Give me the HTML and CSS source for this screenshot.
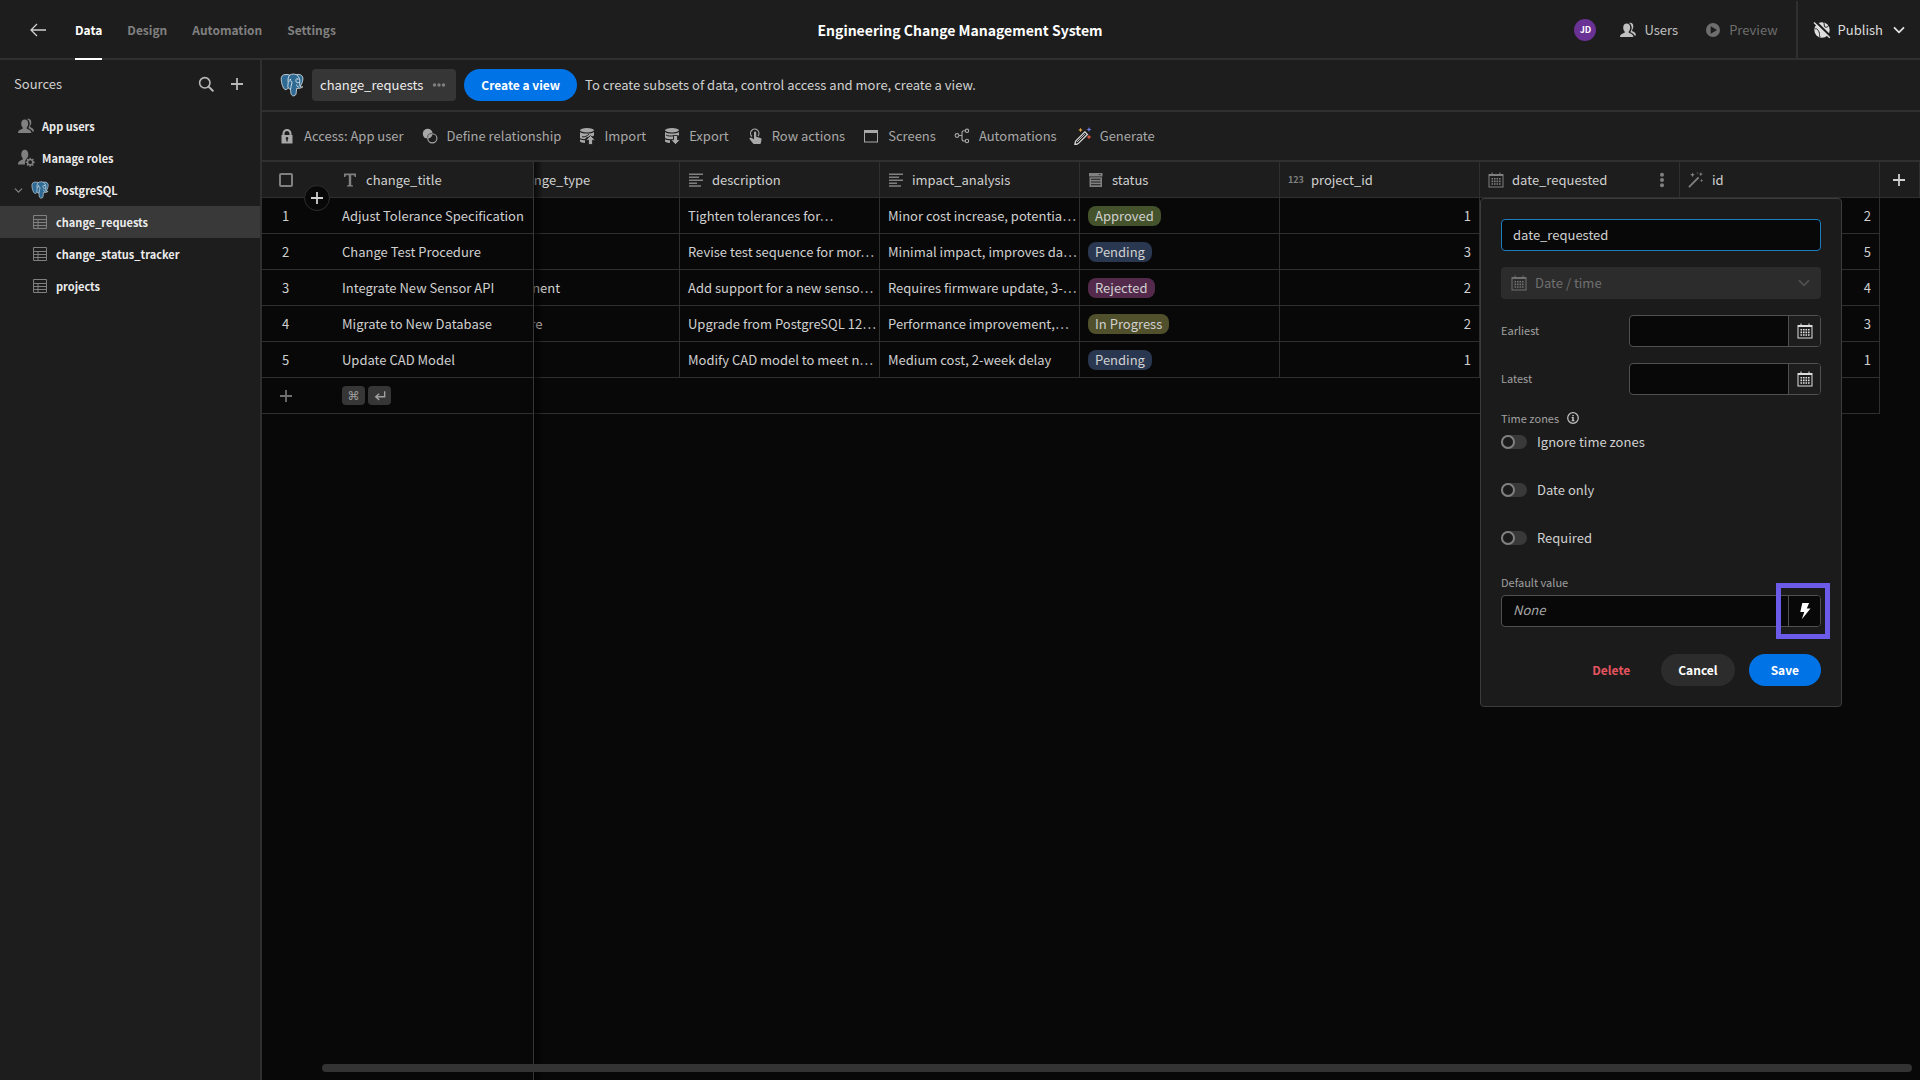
FILE: index.html
```
<!doctype html>
<html lang="en">
  <head>
    <title>Engineering Change Management System</title>
    <meta charset="utf-8">
    <meta name="viewport" content="width=device-width, initial-scale=1">
    <link rel="stylesheet" href="styles.css">
  </head>

  <body>
    <!-- icon sprite -->
    <svg class="sprite" aria-hidden="true">
      <symbol id="i-back" viewBox="0 0 18 18"><path d="M17 9H2M8 3L2 9l6 6" fill="none" stroke="currentColor" stroke-width="1.3"/></symbol>
      <symbol id="i-plus" viewBox="0 0 18 18"><path d="M9 3v12M3 9h12" stroke="currentColor" stroke-width="1.8" fill="none"/></symbol>
      <symbol id="i-search" viewBox="0 0 18 18"><circle cx="7.8" cy="7.8" r="5.2" fill="none" stroke="currentColor" stroke-width="1.6"/><path d="M11.6 11.6l4.2 4.2" stroke="currentColor" stroke-width="2" stroke-linecap="round"/></symbol>
      <symbol id="i-users" viewBox="0 0 18 18"><path d="M1 16c0-2.600 2.300-3.400 4.700-4.300v-1.200C4.600 9.500 4.200 8 4.200 6.500 4.200 3.900 5.700 2.400 7.700 2.400s3.500 1.500 3.500 4.100c0 1.500-.4 3-1.500 4v1.200c2.400.9 4.700 1.700 4.700 4.300z"/><path d="M10 1.900c2.600-.9 4.300.7 4.300 3.300 0 1.600-.4 2.700-1.200 3.700v1.200c2 .9 3.900 1.800 3.900 4.400h-1.600c-.7-1.700-2.300-2.600-4-3.200v-.6c1-1.200 1.300-2.700 1.300-4.200 0-2-.9-3.600-2.700-4.600z"/></symbol>
      <symbol id="i-roles" viewBox="0 0 18 18"><path d="M8 15.500H1c0-3 2.400-4.100 4.800-5v-1.200c-1-1-1.500-2.300-1.500-3.900 0-2.900 1.400-4.600 3.500-4.600s3.500 1.700 3.500 4.600c0 1.600-.5 2.900-1.500 3.900C8.300 11 7.600 13.300 8 15.500z"/><circle cx="13.200" cy="13.200" r="2.600" fill="none" stroke="currentColor" stroke-width="1.500"/><path d="M13.200 8.700v1.900M13.200 15.800v1.900M8.700 13.200h1.900M15.800 13.200h1.900M10 10l1.400 1.400M15 15l1.400 1.400M16.400 10L15 11.400M11.400 15L10 16.400" stroke="currentColor" stroke-width="1.400"/></symbol>
      <symbol id="i-chevron" viewBox="0 0 18 18"><path d="M4.500 6.800L9 11.300l4.500-4.500" fill="none" stroke="currentColor" stroke-width="1.800" stroke-linecap="round" stroke-linejoin="round"/></symbol>
      <symbol id="i-postgres" viewBox="0 0 24 24">
        <path d="M6 1.500C2.500 1.300 1 3.500 1.200 6.500 1.500 10.500 3 15.500 5 16.500c1.300.6 2.500-.6 3.300-1.700.4 1 .9 1.300 2.200 1.300.2 2 .1 4 1 5.700.9 1.700 3.900 1.400 4.500-.7.500-1.900.3-3.800.6-5.700 2.300.2 4.700-.2 6.200-1.600-1.300.2-2.100.1-2.700-.3C22.300 10.500 23.500 6 22.700 4 21.500 1.300 18.500 1 16.500 1.700 14.500.8 11.500.8 9.800 2 8.700 1.600 7.400 1.500 6 1.500z" fill="#2f6a94" stroke="#dfe7ec" stroke-width=".8"/>
        <path d="M9.800 2C7.600 4 8 7.500 8.200 9.500c.1 1.700-1 3.700.1 5.300M16.500 1.700c2.800 2 3.700 5 3.200 7.600-.2 1.700.1 3 .4 4M8.300 8.500c1.200-1 3-1 3.500.2.500 1.500-.6 3-.7 4.500 0 1-.3 2.200-.6 2.900M19.600 9c-1 .8-2.600 1-3.200.2-.8-1-.6-2.700.2-3.700M16.700 11.500c0 1.500 1 2.700 2.400 2.600" fill="none" stroke="#dfe7ec" stroke-width=".9"/>
        <circle cx="10.300" cy="6.500" r=".8" fill="#dfe7ec"/><circle cx="17.800" cy="6" r=".8" fill="#dfe7ec"/>
      </symbol>
      <symbol id="i-table" viewBox="0 0 18 18"><path d="M2.500 2.500h13v13h-13zM2.500 6.500h13M2.500 9.500h13M2.500 12.500h13M7 6.500v9" fill="none" stroke="currentColor" stroke-width="1"/></symbol>
      <symbol id="i-more" viewBox="0 0 18 18"><circle cx="4.500" cy="9" r="1.700"/><circle cx="9" cy="9" r="1.700"/><circle cx="13.500" cy="9" r="1.700"/></symbol>
      <symbol id="i-more-v" viewBox="0 0 18 18"><circle cx="9" cy="3.800" r="2"/><circle cx="9" cy="9" r="2"/><circle cx="9" cy="14.200" r="2"/></symbol>
      <symbol id="i-lock" viewBox="0 0 18 18"><path fill-rule="evenodd" d="M3.500 8h1V6.500a4.500 4.500 0 0 1 9 0V8h1v8.500h-11zM6.500 8h5V6.500a2.500 2.500 0 0 0-5 0zM9 10a1.300 1.300 0 0 0-.7 2.400V14.500h1.400v-2.100A1.300 1.300 0 0 0 9 10z"/></symbol>
      <symbol id="i-relation" viewBox="0 0 18 18"><circle cx="6.700" cy="6.700" r="4.900"/><circle cx="11.300" cy="11.300" r="5.500" fill="#1d1d1d"/><circle cx="11.300" cy="11.300" r="4.600" fill="none" stroke="currentColor" stroke-width="1.100"/><path d="M7.300 11.200a4.200 4.200 0 0 1 3.900-3.900 4.900 4.900 0 0 1-3.900 3.900z" stroke="currentColor" stroke-width=".8"/></symbol>
      <symbol id="i-import" viewBox="0 0 18 18"><ellipse cx="9" cy="3.300" rx="7" ry="2.200"/><path d="M2 5c2.500 2 11.500 2 14 0v3.400c-1.600 1.300-4.700 1-7 1.500L6.600 12.200C4.500 12 2.800 11.600 2 11z"/><path d="M2 12.300c1.200.7 3 .9 5 1v2.700c-2.400-.1-4.400-.6-5-1.500z"/><path d="M12.500 8.500l4.800 4.700h-2.800V17.500h-4v-4.300H7.700z" stroke="#1d1d1d" stroke-width=".8"/><path d="M4 9.800c3 .5 5-.8 7-2.600" stroke="#1d1d1d" stroke-width="1" fill="none"/></symbol>
      <symbol id="i-export" viewBox="0 0 18 18"><ellipse cx="9" cy="3.300" rx="7" ry="2.200"/><path d="M2 5c2.500 2 11.500 2 14 0v3.500H10v3.800C6.500 12.300 3 12 2 11z"/><path d="M2 12.300c1.200.7 3 .9 5 1v2.700c-2.400-.1-4.400-.6-5-1.500z"/><path d="M10.500 8.500h4v4.300h2.800l-4.800 4.700-4.800-4.700h2.800z" stroke="#1d1d1d" stroke-width=".8"/><path d="M3 8c2 1.200 5 1.200 7.500.8" stroke="#1d1d1d" stroke-width="1" fill="none"/></symbol>
      <symbol id="i-tap" viewBox="0 0 18 18"><path d="M6 9.500A4.200 4.200 0 1 1 12 9" fill="none" stroke="currentColor" stroke-width="1.200"/><path d="M8 5.500a1.100 1.100 0 0 1 2.200 0v4.300l4.300 1.200c.8.200 1.100.7 1 1.500l-.6 3.400c-.1.700-.5 1.100-1.200 1.100H8.200c-.5 0-.8-.2-1.100-.6l-3.400-4.200c-.7-1 .4-2.100 1.500-1.500l2.800 1.600z"/></symbol>
      <symbol id="i-window" viewBox="0 0 18 18"><path fill-rule="evenodd" d="M2 3h14v12.500H2zM3 6v8.500h12V6z"/></symbol>
      <symbol id="i-flow" viewBox="0 0 18 18"><g fill="none" stroke="currentColor" stroke-width="1.100"><circle cx="4" cy="8.500" r="1.900"/><circle cx="14" cy="3.800" r="1.700"/><circle cx="14" cy="14" r="1.700"/><path d="M6 8.500h3M12.300 3.800H11c-1.300 0-2 .7-2 2v6.200c0 1.300.7 2 2 2h1.300"/></g></symbol>
      <symbol id="i-generate" viewBox="0 0 18 18"><path d="M10.800 4.800l2.600 2.600-9 9c-.8.800-3.500 1.200-3.500 1.200s.3-2.800 1-3.700z" fill="none" stroke="#d8d8d8" stroke-width="1.300"/><path d="M3 15L11 7" stroke="#d8d8d8" stroke-width=".8"/><path d="M6.500.8l.7 1.500 1.500.7-1.500.7-.7 1.500-.7-1.500L4.300 3l1.500-.7z" fill="#e8a33d"/><path d="M15 0l.7 1.800 1.800.7-1.800.7L15 5l-.7-1.800-1.800-.7 1.800-.7z" fill="#6a7ae8"/><path d="M15 7.500l.8 1.700 1.700.8-1.700.8-.8 1.700-.8-1.700-1.700-.8 1.700-.8z" fill="#e2573f"/></symbol>
      <symbol id="i-text" viewBox="0 0 18 18"><path d="M3 2.500h12V6h-1.300l-.5-1.800H10.200V14l1.800.6v.9H6v-.9l1.800-.6V4.200H4.800L4.300 6H3z"/></symbol>
      <symbol id="i-lines" viewBox="0 0 18 18"><path d="M2 2.500h14V4H2zM2 5.500h10V7H2zM2 8.500h14V10H2zM2 11.500h8V13H2zM2 14.300h12v1.400H2z"/></symbol>
      <symbol id="i-options" viewBox="0 0 18 18"><path fill-rule="evenodd" d="M2 2h13.500v3.500H2zM11.700 3l1 1.300 1-1.300z"/><path fill-rule="evenodd" d="M2.500 6.300H15V16H2.500zM4 7.800v1h9.500v-1zM4 10.500v1h9.500v-1zM4 13.200v1h9.500v-1z"/></symbol>
      <symbol id="i-calendar" viewBox="0 0 18 18"><path fill-rule="evenodd" d="M1.500 3h3V1.500h1V3h7V1.500h1V3h3v13.500h-15zM2.500 5v10.500h13V5z"/><path d="M4.500 7h1.600v1.600H4.500zM7 7h1.600v1.600H7zM9.500 7h1.600v1.600H9.500zM12 7h1.600v1.600H12zM4.500 9.600h1.600v1.600H4.500zM7 9.600h1.600v1.600H7zM9.500 9.600h1.600v1.600H9.500zM12 9.600h1.600v1.600H12zM4.500 12.200h1.600v1.600H4.500zM7 12.200h1.600v1.600H7zM9.500 12.200h1.600v1.600H9.500zM12 12.200h1.600v1.600H12z"/></symbol>
      <symbol id="i-wand" viewBox="0 0 18 18"><path d="M1.300 15.500L11 5.800l1.300 1.300-9.700 9.700z"/><path d="M5.500 1.500l.7 1.600 1.700.7-1.700.7-.7 1.700-.7-1.700-1.600-.7 1.600-.7zM13.800 1l.6 1.500 1.500.6-1.500.6-.6 1.500-.6-1.500-1.500-.6 1.500-.6zM14.600 8l.5 1.100 1.100.5-1.100.5-.5 1.100-.5-1.100-1.100-.5 1.100-.5zM9.800 1.500h1v1h-1z"/></symbol>
      <symbol id="i-play" viewBox="0 0 18 18"><path fill-rule="evenodd" d="M9 2a7 7 0 1 1 0 14A7 7 0 0 1 9 2zM6.700 5.200v7.600L13 9z"/></symbol>
      <symbol id="i-publish" viewBox="0 0 18 18"><circle cx="9" cy="9" r="7.700"/><path d="M10.500 1c1.500 2 0 4 1.500 5s3-.5 4-2M2 8c2-1 3 1 4 3s0 3 1 5" stroke="#1d1d1d" stroke-width="1" fill="none"/><path d="M2 0l16 16" stroke="#1d1d1d" stroke-width="2.400"/><path d="M1 1.500l15.800 15.300" stroke="currentColor" stroke-width="1.500"/></symbol>
      <symbol id="i-info" viewBox="0 0 18 18"><circle cx="9" cy="9" r="6.800" fill="none" stroke="currentColor" stroke-width="1.600"/><path d="M8 5h2v1.700H8zM7.200 7.800H10v4.200h1v1.200H7.200V12H8V9h-.8z"/></symbol>
      <symbol id="i-bolt" viewBox="0 0 18 18"><path d="M6.300 1h6.800L10.800 6.500h3.700L5.800 17.300l2.500-7.300H4.300z"/></symbol>
      <symbol id="i-return" viewBox="0 0 18 18"><path d="M15 3v7H4M8 6l-4.500 4L8 14" fill="none" stroke="currentColor" stroke-width="1.800"/></symbol>
    </svg>

    <div class="app">
      <header class="topbar">
        <nav class="topnav">
          <a class="back" href="#" aria-label="Back"><svg class="icon"><use href="#i-back"/></svg></a>
          <a class="tab active" href="#">Data</a>
          <a class="tab" href="#">Design</a>
          <a class="tab" href="#">Automation</a>
          <a class="tab" href="#">Settings</a>
        </nav>
        <h1 class="title">Engineering Change Management System</h1>
        <div class="topactions">
          <span class="avatar">JD</span>
          <button class="action"><svg class="icon"><use href="#i-users"/></svg>Users</button>
          <button class="action muted"><svg class="icon"><use href="#i-play"/></svg>Preview</button>
          <button class="action publish"><svg class="icon"><use href="#i-publish"/></svg>Publish<svg class="icon"><use href="#i-chevron"/></svg></button>
        </div>
      </header>

      <div class="body">
        <aside class="sidebar">
          <div class="sidebar-head">
            <h2>Sources</h2>
            <button aria-label="Search"><svg class="icon"><use href="#i-search"/></svg></button>
            <button aria-label="Add source"><svg class="icon"><use href="#i-plus"/></svg></button>
          </div>
          <nav class="sources">
            <a class="source" href="#"><svg class="icon"><use href="#i-users"/></svg>App users</a>
            <a class="source" href="#"><svg class="icon"><use href="#i-roles"/></svg>Manage roles</a>
            <a class="source database" href="#"><svg class="caret"><use href="#i-chevron"/></svg><svg class="icon"><use href="#i-postgres"/></svg>PostgreSQL</a>
            <a class="source child selected" href="#"><svg class="icon"><use href="#i-table"/></svg>change_requests</a>
            <a class="source child" href="#"><svg class="icon"><use href="#i-table"/></svg>change_status_tracker</a>
            <a class="source child" href="#"><svg class="icon"><use href="#i-table"/></svg>projects</a>
          </nav>
        </aside>

        <main class="main">
          <div class="viewbar">
            <svg class="logo"><use href="#i-postgres"/></svg>
            <a class="view" href="#">change_requests<svg class="icon"><use href="#i-more"/></svg></a>
            <button class="btn primary">Create a view</button>
            <p>To create subsets of data, control access and more, create a view.</p>
          </div>

          <div class="toolbar">
            <button class="tool"><svg class="icon"><use href="#i-lock"/></svg>Access: App user</button>
            <button class="tool"><svg class="icon"><use href="#i-relation"/></svg>Define relationship</button>
            <button class="tool"><svg class="icon"><use href="#i-import"/></svg>Import</button>
            <button class="tool"><svg class="icon"><use href="#i-export"/></svg>Export</button>
            <button class="tool"><svg class="icon"><use href="#i-tap"/></svg>Row actions</button>
            <button class="tool"><svg class="icon"><use href="#i-window"/></svg>Screens</button>
            <button class="tool"><svg class="icon"><use href="#i-flow"/></svg>Automations</button>
            <button class="tool"><svg class="icon"><use href="#i-generate"/></svg>Generate</button>
          </div>

          <div class="grid">
            <div class="grid-scroll" id="grid-scroll">
              <table class="data">
                <colgroup>
                  <col class="col-num"><col class="col"><col class="col"><col class="col"><col class="col"><col class="col"><col class="col"><col class="col"><col class="col"><col class="col-add">
                </colgroup>
                <thead>
                  <tr>
                    <th class="num"><input type="checkbox" aria-label="Select all rows"></th>
                    <th class="pin"><div class="head"><svg class="icon"><use href="#i-text"/></svg>change_title</div></th>
                    <th><div class="head"><svg class="icon"><use href="#i-options"/></svg>change_type</div></th>
                    <th><div class="head"><svg class="icon"><use href="#i-lines"/></svg>description</div></th>
                    <th><div class="head"><svg class="icon"><use href="#i-lines"/></svg>impact_analysis</div></th>
                    <th><div class="head"><svg class="icon"><use href="#i-options"/></svg>status</div></th>
                    <th><div class="head"><span class="digits">123</span>project_id</div></th>
                    <th><div class="head"><svg class="icon"><use href="#i-calendar"/></svg>date_requested<button class="menu" aria-label="Column menu"><svg class="icon"><use href="#i-more-v"/></svg></button></div></th>
                    <th><div class="head"><svg class="icon"><use href="#i-wand"/></svg>id</div></th>
                    <th class="add"><button aria-label="Add column"><svg class="icon"><use href="#i-plus"/></svg></button></th>
                  </tr>
                </thead>
                <tbody>
                  <tr>
                    <td class="num">1</td><td class="pin">Adjust Tolerance Specification</td><td></td><td>Tighten tolerances for…</td><td>Minor cost increase, potentia…</td>
                    <td><span class="badge green">Approved</span></td><td class="right">1</td><td></td><td class="right">2</td>
                  </tr>
                  <tr>
                    <td class="num">2</td><td class="pin">Change Test Procedure</td><td></td><td>Revise test sequence for mor…</td><td>Minimal impact, improves da…</td>
                    <td><span class="badge blue">Pending</span></td><td class="right">3</td><td></td><td class="right">5</td>
                  </tr>
                  <tr>
                    <td class="num">3</td><td class="pin">Integrate New Sensor API</td><td>Component</td><td>Add support for a new senso…</td><td>Requires firmware update, 3-…</td>
                    <td><span class="badge pink">Rejected</span></td><td class="right">2</td><td></td><td class="right">4</td>
                  </tr>
                  <tr>
                    <td class="num">4</td><td class="pin">Migrate to New Database</td><td>Software</td><td>Upgrade from PostgreSQL 12…</td><td>Performance improvement,…</td>
                    <td><span class="badge olive">In Progress</span></td><td class="right">2</td><td></td><td class="right">3</td>
                  </tr>
                  <tr>
                    <td class="num">5</td><td class="pin">Update CAD Model</td><td></td><td>Modify CAD model to meet n…</td><td>Medium cost, 2-week delay</td>
                    <td><span class="badge blue">Pending</span></td><td class="right">1</td><td></td><td class="right">1</td>
                  </tr>
                  <tr class="new-row">
                    <td class="num"><svg class="icon"><use href="#i-plus"/></svg></td>
                    <td class="pin"><div class="keys"><kbd>⌘</kbd><kbd><svg><use href="#i-return"/></svg></kbd></div></td>
                    <td colspan="7"></td>
                  </tr>
                </tbody>
              </table>
            </div>
            <div class="pin-edge"></div>
            <button class="insert" aria-label="Insert row"><svg class="icon"><use href="#i-plus"/></svg></button>
            <div class="scrollbar"></div>

            <form class="popover">
              <input class="field focused" type="text" value="date_requested" aria-label="Column name">
              <div class="type">
                <svg class="icon"><use href="#i-calendar"/></svg>
                <select aria-label="Column type" disabled><option>Date / time</option></select>
                <svg class="icon"><use href="#i-chevron"/></svg>
              </div>
              <div class="row">
                <label for="earliest">Earliest</label>
                <div class="group">
                  <input id="earliest" type="text"><button type="button" aria-label="Pick earliest date"><svg class="icon"><use href="#i-calendar"/></svg></button>
                </div>
              </div>
              <div class="row">
                <label for="latest">Latest</label>
                <div class="group">
                  <input id="latest" type="text"><button type="button" aria-label="Pick latest date"><svg class="icon"><use href="#i-calendar"/></svg></button>
                </div>
              </div>
              <div class="zones">
                <div class="caption">Time zones<svg><use href="#i-info"/></svg></div>
                <label class="switch"><input type="checkbox">Ignore time zones</label>
              </div>
              <label class="switch"><input type="checkbox">Date only</label>
              <label class="switch"><input type="checkbox">Required</label>
              <div class="default">
                <label for="default">Default value</label>
                <div class="group">
                  <input id="default" type="text" placeholder="None"><button class="dark" type="button" aria-label="Bindings"><svg class="icon"><use href="#i-bolt"/></svg></button>
                  <span class="highlight"></span>
                </div>
              </div>
              <div class="buttons">
                <button class="btn danger" type="button">Delete</button>
                <button class="btn secondary" type="button">Cancel</button>
                <button class="btn primary" type="button">Save</button>
              </div>
            </form>
          </div>
        </main>
      </div>
    </div>
    <script src="grid.js"></script>
  </body>
</html>
```

FILE: styles.css
```
*, *::before {
  box-sizing: border-box;
}
:root {
  --panel: #1d1d1d;
  --bg: #080808;
  --line: #2f2f2f;
  --text: #d0d0d0;
  --blue: #0073e6;
}
body {
  margin: 0;
  background: var(--bg);
  color: var(--text);
  font: 13px/18px "Noto Sans CJK SC", "Noto Sans", sans-serif;
}
button, input, select {
  font: inherit;
  color: inherit;
}
button {
  padding: 0;
  border: 0;
  background: none;
}
a {
  color: inherit;
  text-decoration: none;
}
h1, h2, p {
  margin: 0;
}
svg {
  display: block;
  flex: none;
  fill: currentColor;
}
.sprite {
  position: absolute;
  width: 0;
  height: 0;
}
.icon {
  width: 18px;
  height: 18px;
}
.app {
  display: flex;
  flex-direction: column;
  height: 100vh;
}

/* top bar */
.topbar {
  display: grid;
  grid-template-columns: 1fr auto 1fr;
  height: 60px;
  background: var(--panel);
  border-bottom: 2px solid var(--line);
}
.topnav {
  display: flex;
  align-items: center;
  gap: 25px;
  padding-left: 29px;
}
.back {
  margin-right: 3px;
}
.tab {
  display: flex;
  align-items: center;
  height: 60px;
  border-top: 2px solid transparent;
  border-bottom: 2px solid transparent;
  color: #808080;
  font-size: 12px;
  font-weight: 700;
}
.tab.active {
  color: #fff;
  border-bottom-color: #fff;
}
.title {
  align-self: center;
  color: #fff;
  font-size: 14px;
  font-weight: 700;
}
.topactions {
  display: flex;
  align-items: center;
  justify-content: flex-end;
}
.avatar {
  width: 22px;
  height: 22px;
  margin-right: 23px;
  border-radius: 50%;
  background: #6a3294;
  color: #fff;
  font-size: 9px;
  font-weight: 700;
  line-height: 22px;
  text-align: center;
}
.action {
  display: flex;
  align-items: center;
  gap: 7px;
  margin-right: 26px;
  color: #c0c0c0;
}
.action.muted {
  margin-right: 18px;
  color: #6e6e6e;
}
.action.publish {
  height: 58px;
  margin: 0;
  padding: 0 12px 0 15px;
  border-left: 2px solid var(--line);
  color: #dedede;
}

/* sources */
.body {
  display: flex;
  flex: 1;
  min-height: 0;
}
.sidebar {
  flex: none;
  width: 262px;
  background: var(--panel);
  border-right: 2px solid var(--line);
}
.sidebar-head {
  display: flex;
  align-items: center;
  gap: 13px;
  height: 48px;
  margin-bottom: 2px;
  padding: 0 14px;
}
.sidebar-head h2 {
  flex: 1;
  font-size: 13px;
  font-weight: 400;
}
.sidebar-head button {
  color: #b8b8b8;
}
.source {
  display: flex;
  align-items: center;
  gap: 7px;
  height: 32px;
  padding-left: 17px;
  color: #ececec;
  font-size: 11px;
  font-weight: 700;
}
.source .icon {
  color: #808080;
}
.source.database {
  gap: 6px;
  padding-left: 12px;
}
.caret {
  width: 13px;
  height: 13px;
  color: #808080;
}
.source.child {
  padding-left: 31px;
}
.source.selected {
  background: #393939;
}

/* main column */
.main {
  display: flex;
  flex: 1;
  flex-direction: column;
  min-width: 0;
}
.viewbar, .toolbar {
  display: flex;
  flex: none;
  align-items: center;
  background: var(--panel);
  border-bottom: 2px solid var(--line);
}
.viewbar {
  gap: 8px;
  height: 52px;
  padding-left: 18px;
}
.logo {
  width: 24px;
  height: 24px;
}
.view {
  display: flex;
  align-items: center;
  gap: 7px;
  height: 32px;
  padding: 0 8px;
  border-radius: 4px;
  background: #363636;
  color: #ececec;
}
.view .icon {
  color: #808080;
}
.btn {
  height: 32px;
  padding: 0 17px;
  border-radius: 16px;
  color: #fff;
  font-size: 12px;
  font-weight: 700;
}
.btn.primary {
  background: var(--blue);
}
.toolbar {
  gap: 17px;
  height: 50px;
  padding-left: 16px;
}
.tool {
  display: flex;
  align-items: center;
  gap: 8px;
  color: #a8a8a8;
}

/* data grid */
.grid {
  position: relative;
  flex: 1;
  min-height: 0;
}
.grid-scroll {
  height: 100%;
  overflow: auto;
  scrollbar-width: none;
}
.data {
  width: 1712px;
  border-spacing: 0;
  table-layout: fixed;
}
.col-num {
  width: 72px;
}
.col {
  width: 200px;
}
.col-add {
  width: 40px;
}
.data th, .data td {
  height: 36px;
  padding: 0 8px;
  overflow: hidden;
  background: var(--bg);
  border-right: 1px solid var(--line);
  border-bottom: 1px solid var(--line);
  font-weight: 400;
  text-align: left;
  white-space: nowrap;
}
.data th {
  background: var(--panel);
}
.data .num, .data .pin {
  position: sticky;
  left: 0;
  z-index: 1;
  border-right: 0;
}
.data .num {
  padding: 0 17px;
}
.data td.num {
  padding-left: 20px;
}
.data .new-row .num {
  padding-left: 15px;
  color: #707070;
}
.data .pin {
  left: 72px;
}
.data .right {
  text-align: right;
}
.num input {
  display: block;
  appearance: none;
  width: 14px;
  height: 14px;
  margin: 0;
  border: 2px solid #808080;
  border-radius: 2px;
}
.head {
  display: flex;
  align-items: center;
  gap: 7px;
}
.head .icon {
  margin-left: -1px;
  color: #808080;
}
.digits {
  color: #808080;
  font-size: 9px;
  font-weight: 700;
}
.menu {
  margin-left: auto;
}
.data .add {
  padding: 0 10px;
}
.add button {
  display: block;
}
.badge {
  display: inline-block;
  height: 20px;
  padding: 0 7px;
  border-radius: 8px;
  line-height: 20px;
  vertical-align: middle;
}
.badge.green {
  background: #45532c;
}
.badge.blue {
  background: #2a3750;
}
.badge.pink {
  background: #532a4b;
}
.badge.olive {
  background: #50502c;
}
.keys {
  display: flex;
  gap: 3px;
}
kbd {
  display: flex;
  align-items: center;
  justify-content: center;
  width: 23px;
  height: 19px;
  border-radius: 4px;
  background: #363636;
  color: #a0a0a0;
  font: 12px "DejaVu Sans", sans-serif;
}
kbd svg {
  width: 14px;
  height: 14px;
}
.pin-edge {
  position: absolute;
  top: 0;
  bottom: 0;
  left: 271px;
  z-index: 3;
  width: 10px;
  border-left: 1px solid #363636;
  background: linear-gradient(to right, rgba(0, 0, 0, .6), transparent);
  pointer-events: none;
}
.insert {
  position: absolute;
  top: 23px;
  left: 42px;
  z-index: 2;
  display: flex;
  align-items: center;
  justify-content: center;
  width: 26px;
  height: 26px;
  border: 1px solid var(--line);
  border-radius: 50%;
  background: var(--bg);
}
.scrollbar {
  position: absolute;
  right: 8px;
  bottom: 8px;
  left: 60px;
  z-index: 4;
  height: 8px;
  border-radius: 4px;
  background: #333;
}

/* column editor */
.popover {
  position: absolute;
  top: 36px;
  right: 78px;
  z-index: 4;
  display: flex;
  flex-direction: column;
  gap: 16px;
  width: 362px;
  padding: 20px;
  border: 1px solid #3c3c3c;
  border-radius: 4px;
  background: #1b1b1b;
}
.field {
  width: 100%;
  height: 32px;
  padding: 0 11px 2px;
  border: 1px solid #505050;
  border-radius: 4px;
  background: var(--bg);
}
.field.focused {
  border-color: #1f7bbf;
}
.type {
  display: flex;
  align-items: center;
  gap: 7px;
  height: 32px;
  padding: 0 8px 0 9px;
  border-radius: 4px;
  background: #2c2c2c;
  color: #707070;
}
.type select {
  flex: 1;
  appearance: none;
  padding: 0;
  border: 0;
  background: none;
  opacity: 1;
}
.type .icon:last-child {
  color: #505050;
}
.row {
  display: flex;
  align-items: center;
  justify-content: space-between;
}
.row > label, .caption, .default > label {
  padding-bottom: 2px;
  color: #a0a0a0;
  font-size: 11px;
}
.row .group {
  width: 192px;
}
.group {
  position: relative;
  display: flex;
  height: 32px;
  border: 1px solid #505050;
  border-radius: 4px;
  background: var(--bg);
}
.group input {
  flex: 1;
  min-width: 0;
  padding: 0 11px 2px;
  border: 0;
  background: none;
}
.group input::placeholder {
  color: #a8a8a8;
  font-style: italic;
}
.group button {
  display: flex;
  align-items: center;
  justify-content: center;
  width: 32px;
  border-left: 1px solid #505050;
  border-radius: 0 3px 3px 0;
  background: var(--panel);
  color: #dedede;
}
.group button.dark {
  background: var(--bg);
  color: #fff;
}
.caption {
  display: flex;
  align-items: center;
  gap: 7px;
  height: 16px;
}
.caption svg {
  width: 14px;
  height: 14px;
  color: #c0c0c0;
}
.switch {
  display: flex;
  align-items: center;
  gap: 10px;
  height: 32px;
  padding-bottom: 2px;
}
.switch input {
  appearance: none;
  width: 26px;
  height: 14px;
  margin: 0;
  border-radius: 7px;
  background: #393939;
}
.switch input::before {
  content: "";
  display: block;
  width: 14px;
  height: 14px;
  border: 2px solid #808080;
  border-radius: 50%;
  background: #1b1b1b;
}
.default > label {
  display: block;
  line-height: 22px;
}
.highlight {
  position: absolute;
  top: -13px;
  right: -10px;
  width: 54px;
  height: 56px;
  border: 5px solid #6c5be8;
  pointer-events: none;
}
.buttons {
  display: flex;
  justify-content: flex-end;
  gap: 14px;
  margin-top: 11px;
}
.btn.danger {
  color: #e4545f;
}
.btn.secondary {
  background: #2c2c2c;
}
.buttons .primary {
  padding: 0 22px;
}
```

FILE: grid.js
```
// open the grid scrolled to its last columns
const scroller = document.getElementById('grid-scroll');
scroller.scrollLeft = scroller.scrollWidth;
```
